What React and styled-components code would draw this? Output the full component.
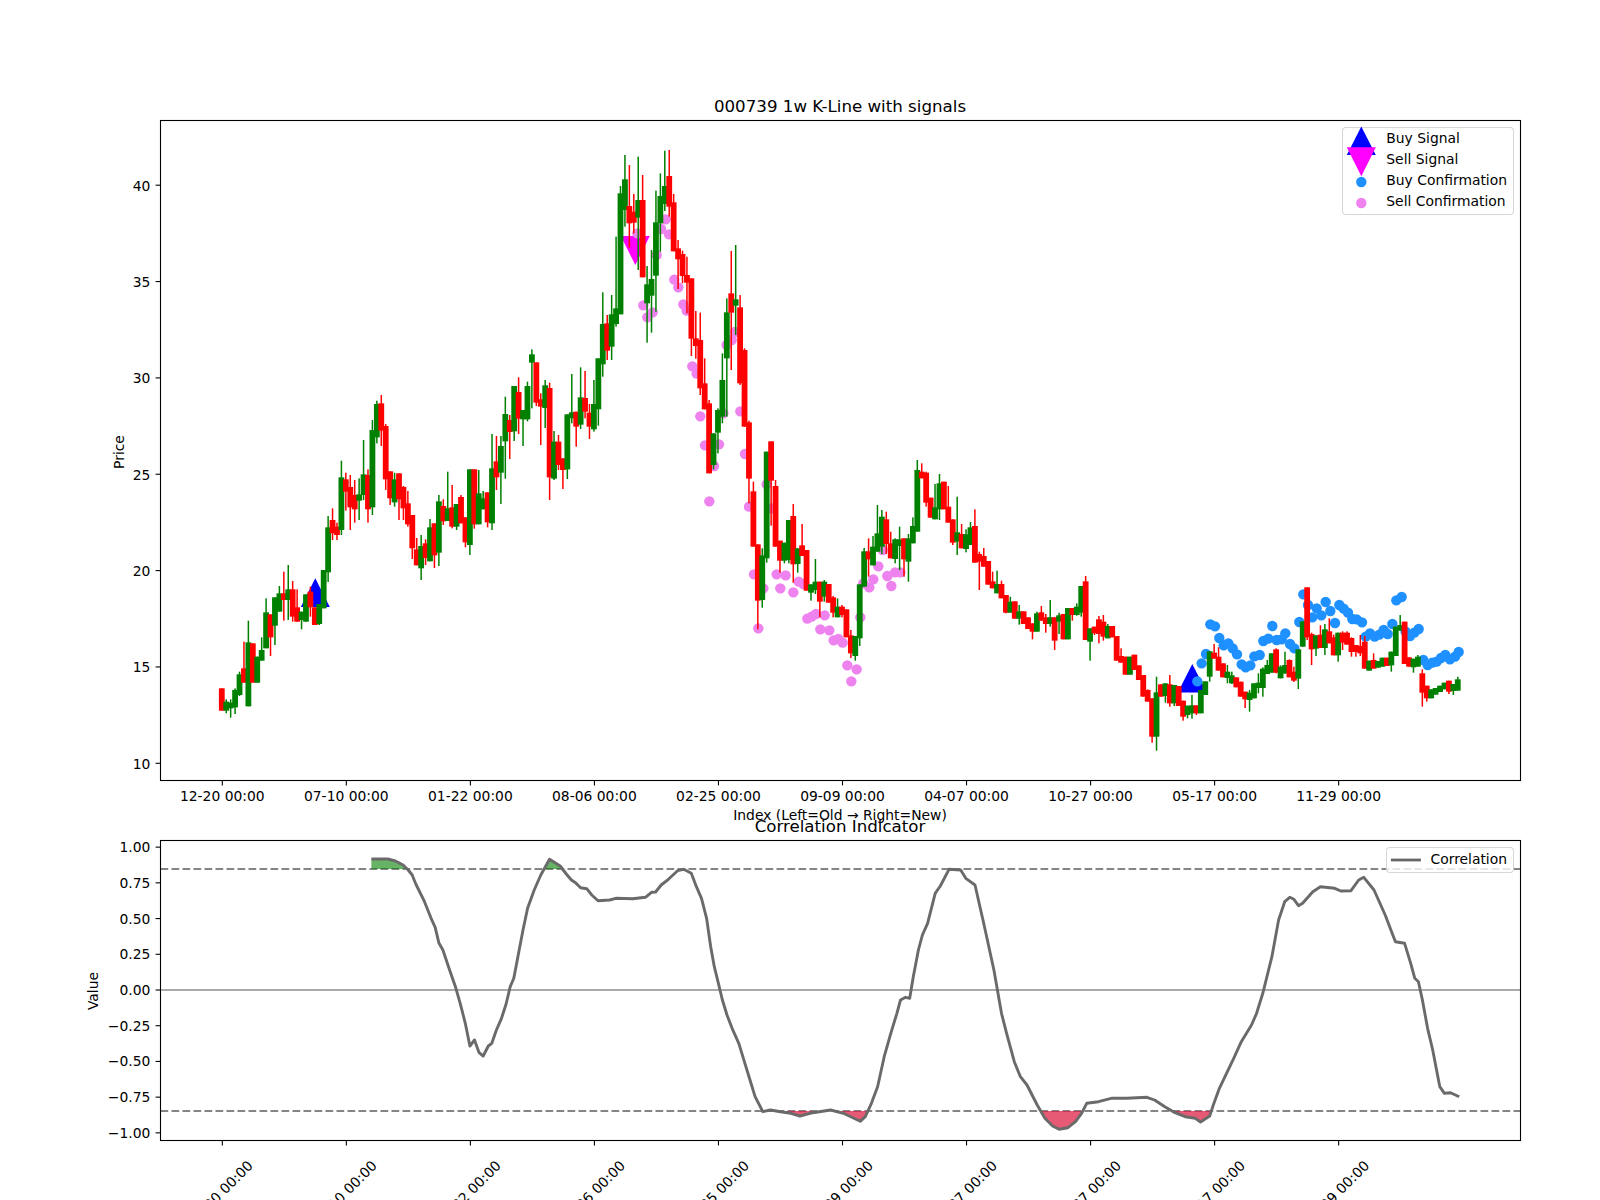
import styled, { createGlobalStyle } from 'styled-components';

const GlobalStyle = createGlobalStyle`
  html, body {
    margin: 0;
    padding: 0;
    background: #fff;
  }
`;

const Figure = styled.div`
  position: relative;
  display: flex;
  flex-direction: column;
  width: 1600px;
  height: 1200px;
  overflow: hidden;
  background: #fff;
  font-family: 'DejaVu Sans', sans-serif;
  color: #000;
`;

const Panel = styled.div`
  position: relative;
  width: 1600px;
  height: ${({ $height }) => $height}px;
`;

const ChartSvg = styled.svg`
  display: block;
  width: 1600px;
  height: ${({ $height }) => $height}px;
  overflow: visible;
`;

const AxisText = styled.text`
  font-family: 'DejaVu Sans', sans-serif;
  font-size: 13.89px;
  fill: #000;
`;

const TitleText = styled.text`
  font-family: 'DejaVu Sans', sans-serif;
  font-size: 16.67px;
  fill: #000;
`;

const Legend = styled.div`
  position: absolute;
  left: ${({ $left }) => $left}px;
  top: ${({ $top }) => $top}px;
  width: ${({ $width }) => $width}px;
  box-sizing: border-box;
  display: flex;
  flex-direction: column;
  padding: ${({ $pad }) => $pad}px 0;
  background: rgba(255, 255, 255, 0.8);
  border: 1.1px solid rgba(204, 204, 204, 0.8);
  border-radius: 4px;
`;

const LegendRow = styled.div`
  display: flex;
  align-items: center;
  box-sizing: border-box;
  height: 21px;
  padding-bottom: 2px;
  font-size: 13.89px;
  line-height: 19px;
  white-space: nowrap;
`;

const LegendKey = styled.svg`
  flex: none;
  width: ${({ $width }) => $width}px;
  height: 21px;
  margin-right: ${({ $gap }) => $gap}px;
  overflow: visible;
`;

const COLORS = { r: '#ff0000', g: '#008000' };
const BLUE = '#1e90ff';
const VIOLET = '#ee82ee';

// axes boxes, figure pixels of a 16x12in matplotlib figure at 100 dpi
const PRICE = { x: 160.5, y: 120.5, w: 1360, h: 660 };
const CORR = { x: 160.5, y: 840.5, w: 1360, h: 300 };
const CORR_TOP = 800;

const candleX = (i) => 221.8 + 4.43 * i;
const tickX = (i) => candleX(i * 28) + 0.5;
const priceY = (v) => 763.3 - (v - 10) * 19.27;
const corrY = (v) => 990 - v * 142.86;

const DATES = ['12-20', '07-10', '01-22', '08-06', '02-25', '09-09', '04-07', '10-27', '05-17', '11-29'];

// candle rows read off the chart: colour, body top, body bottom, high, low.
// each block has its own vertical offset, values are at 3x
const block = (off, text) =>
  text
    .trim()
    .split(/\s*\n\s*/)
    .map((row) => {
      const [c, t, b, h, l] = row.split(' ');
      return { c, t: off + t / 3, b: off + b / 3, h: off + h / 3, l: off + l / 3 };
    });

const CANDLES = [
  ...block(400, `r 865 932 865 932
    g 905 932 898 940
    g 908 925 898 953
    g 870 922 865 942
    g 823 885 815 888
    r 805 848 725 848
    g 727 919 662 919
    r 730 848 730 848
    g 770 848 770 848
    g 750 782 712 782
    g 637 745 595 745
    r 643 712 643 768
    g 592 677 592 735
    g 580 635 558 635
    r 580 600 515 662
    g 568 600 495 660
    r 568 650 543 665
    r 622 665 568 665
    g 635 660 635 688
    g 583 665 583 665
    r 575 622 560 650
    r 622 675 622 675
    g 612 672 612 675
    g 510 625 510 625
    g 382 517 348 546
    r 360 400 325 420
    r 380 405 368 420`),
  ...block(340, `g 412 570 362 585
    r 418 455 398 512
    r 441 502 405 570
    r 465 508 420 548
    g 463 482 415 540
    g 403 465 300 480
    r 405 508 388 548
    g 270 502 240 525
    g 192 292 182 310
    r 190 272 165 318
    r 258 418 252 450
    r 394 475 394 495
    g 418 487 398 500
    r 400 478 400 540
    r 441 505 438 540
    r 490 553 453 560
    r 525 625 525 657
    r 628 676 594 676
    g 618 685 585 720
    r 610 654 598 675
    g 562 664 537 664
    r 550 646 550 684
    g 484 638 465 678
    r 498 544 478 555
    g 505 543 395 543
    r 502 560 435 565
    g 492 560 492 570
    r 471 550 465 550
    r 532 607 532 622
    g 388 615 388 645
    r 388 553 388 566
    g 460 553 390 553
    g 475 508 453 508
    r 457 547 457 562
    g 385 550 282 570
    r 364 412 288 450
    g 318 398 288 492
    g 222 304 170 416
    r 240 276 225 357
    g 138 274 138 303
    r 156 236 112 282
    g 210 238 210 318
    g 138 238 125 244
    g 43 68 28 205
    r 67 188 67 198
    r 178 200 160 315
    g 136 204 120 264
    r 144 412 128 480`),
  ...block(130, `g 935 1046 903 1050
    r 935 1005 915 1020
    r 985 1020 985 1077
    g 853 1018 853 1047
    g 847 865 732 880
    r 845 890 845 950
    g 802 884 712 897
    r 804 845 723 865
    r 848 890 822 927
    g 822 898 750 905
    g 685 838 685 887
    g 582 703 487 740
    r 580 662 555 690
    g 553 650 495 690
    g 535 582 320 590
    g 190 553 168 553
    g 148 240 75 290
    r 228 280 105 353
    r 245 278 192 310
    g 210 263 80 420
    r 210 442 135 442
    g 463 520 408 638
    g 447 497 360 608
    g 277 437 182 545
    g 198 280 130 365
    g 168 222 62 243
    r 138 230 60 260
    r 217 364 192 364
    r 355 388 330 477
    r 372 438 362 460
    r 435 458 380 550
    r 445 626 445 678
    r 625 648 543 686
    r 630 775 548 795
    r 760 838 685 838
    r 820 1030 810 1030
    g 910 1005 910 1018
    g 840 908 835 970
    g 750 860 670 880
    g 547 685 505 860
    r 490 548 363 720
    g 508 527 345 615
    r 532 760 495 765
    r 660 890 655 890
    r 877 1046 872 1120`),
  ...block(430, `r 184 350 155 350
    r 343 512 343 598
    g 376 510 355 533
    g 65 385 65 398
    r 34 152 34 287
    r 168 350 150 350
    r 332 392 332 428
    g 338 392 338 400
    g 270 390 270 400
    r 258 403 222 458
    g 355 402 355 428
    r 346 378 282 378
    r 360 482 360 482
    g 463 488 463 512
    g 455 480 387 492
    r 455 515 455 562
    g 455 500 450 515
    r 462 518 462 518
    r 502 548 498 562
    g 530 562 505 562
    r 530 555 525 562
    r 538 622 538 622
    r 616 670 600 684
    g 618 678 618 692
    g 463 625 463 648
    g 364 470 354 470
    r 364 388 325 440
    g 350 406 318 406
    g 310 365 225 365
    g 260 350 240 372
    r 268 342 245 372
    r 340 385 305 385
    g 328 387 325 400
    g 328 348 290 420
    r 325 388 325 440
    g 325 395 312 455
    g 288 340 262 340
    g 120 305 90 305
    r 125 145 100 145
    r 128 218 125 230
    r 203 263 203 263
    g 232 268 162 268
    g 160 238 132 270
    r 155 238 155 238
    r 230 278 168 278
    r 268 338 268 345
    g 307 335 200 375
    r 312 355 282 355
    g 313 357 298 367
    g 292 345 276 345
    r 288 398 238 398
    r 372 395 365 480
    r 378 410 354 410
    r 393 464 393 464
    r 454 475 425 475
    g 462 490 422 490
    r 462 505 452 505
    r 495 548 495 550
    g 515 548 500 548
    r 514 566 514 566
    g 544 566 525 584
    r 544 582 544 582
    r 562 597 562 597
    r 580 605 580 628
    g 550 605 545 605
    r 547 572 528 572
    r 562 582 552 608
    g 562 582 510 590
    r 562 632 562 660
    g 556 575 548 612
    r 552 628 552 628
    g 534 628 534 628
    r 534 555 534 572
    g 530 555 520 557
    g 468 548 468 560
    r 454 630 438 630
    g 595 635 595 692
    r 590 610 590 615
    r 568 612 558 640`),
  ...block(560, `r 185 230 165 242
    g 198 235 192 235
    r 198 232 198 232
    r 228 302 228 302
    r 288 308 265 308
    r 290 344 290 344
    g 290 344 290 344
    r 284 330 284 330
    r 316 360 316 360
    r 345 410 345 410
    r 390 425 388 425
    r 415 530 415 548
    g 397 530 350 572
    r 373 410 373 410
    g 370 408 370 428
    r 373 430 345 440
    g 375 430 375 438
    r 378 438 378 438
    r 422 470 422 482
    g 437 465 437 475
    g 436 460 405 476
    r 436 460 436 465
    g 390 460 390 460
    g 364 405 364 405
    g 274 350 274 365
    r 278 296 252 296
    r 290 332 262 332
    r 310 352 310 352
    g 335 354 315 370
    g 346 370 335 372
    r 352 382 352 382
    r 365 410 365 410
    r 395 418 395 444
    g 398 420 390 455
    g 370 415 370 415
    g 368 384 340 400
    g 326 384 322 410
    g 315 342 300 342
    g 280 338 280 338
    r 268 338 265 340
    g 320 355 316 355
    g 315 340 275 342
    r 300 352 298 352
    r 335 362 320 366
    g 268 356 268 387
    g 184 260 184 260
    r 82 232 82 240
    r 222 268 218 315
    g 226 266 226 288
    r 224 264 196 264
    g 208 264 192 285
    r 214 250 175 250
    r 232 286 224 286
    g 218 286 218 305
    r 218 248 214 270
    r 218 254 214 254
    r 234 276 232 290
    r 255 276 255 290
    r 258 280 225 288
    r 245 326 228 326
    g 302 332 302 332
    r 300 326 280 326
    g 303 323 303 323
    g 293 320 293 320
    r 293 318 293 318
    g 275 316 275 335
    g 200 288 200 288
    g 195 212 165 212
    r 185 312 185 312
    r 292 320 292 320
    g 296 322 296 338
    g 290 320 285 320
    r 340 398 328 440
    r 377 415 377 425
    g 388 415 388 415
    g 384 404 384 404
    g 377 396 377 396
    g 368 388 368 388
    r 362 395 362 402
    g 372 393 372 405
    g 358 392 350 392`),
];

const dots = (x0, y0, list) => list.map(([x, y]) => [x0 + x / 3, y0 + y / 3]);

const BUY_DOTS = dots(1100, 560, [
  [292, 364], [305, 310], [318, 282], [331, 193], [345, 199], [358, 234], [371, 256], [385, 250], [398, 265],
  [411, 283], [425, 313], [437, 322], [451, 316], [463, 289], [479, 285], [490, 243], [505, 236], [517, 198],
  [530, 240], [545, 238], [556, 220], [570, 252], [583, 265], [598, 186], [610, 103], [624, 135], [637, 172],
  [650, 145], [664, 166], [677, 126], [691, 153], [705, 189], [718, 135], [731, 146], [744, 158], [757, 177],
  [770, 178], [786, 187], [797, 230], [810, 220], [824, 230], [838, 224], [851, 210], [863, 222], [877, 192],
  [889, 121], [905, 111], [917, 215], [930, 228], [943, 218], [956, 207], [970, 300], [983, 315], [997, 308],
  [1010, 305], [1023, 294], [1036, 285], [1050, 298], [1065, 290], [1076, 276],
]);

const SELL_DOTS = [
  ...dots(550, 130, [
    [262, 310], [347, 268], [333, 297], [357, 313], [320, 375], [373, 449], [385, 472], [400, 523], [410, 542],
    [280, 526], [308, 547], [292, 562], [427, 709], [440, 731], [451, 859], [530, 645], [545, 630], [555, 606],
    [520, 850], [571, 844],
  ]),
  ...dots(700, 430, [
    [15, 46], [57, 43], [42, 108], [28, 214], [135, 72], [147, 230], [200, 163], [215, 235], [162, 433], [190, 475],
    [175, 595], [230, 433], [257, 436], [241, 475], [280, 487], [296, 455], [310, 462], [322, 566], [335, 560],
    [348, 552], [374, 556], [361, 598], [388, 601], [401, 631], [415, 627], [428, 638], [442, 706], [470, 718],
    [454, 754], [481, 562], [490, 460], [508, 472], [520, 448], [535, 409], [548, 360], [562, 438], [574, 468],
    [585, 427], [601, 427],
  ]),
];

const curve = (x0, list) => list.map(([x, y]) => [x0 + x / 1.96, 780 + y / 3]);

const CORR_LINE = [
  ...curve(0, [
    [728, 237], [760, 237], [775, 243], [790, 255], [800, 270], [808, 285], [815, 312], [832, 365], [845, 415],
    [853, 442], [860, 488], [868, 510], [880, 565], [893, 622], [902, 670], [912, 730], [921, 798], [930, 780],
    [939, 818], [947, 828], [957, 798], [964, 790], [973, 750], [983, 715], [992, 672], [1000, 620], [1007, 595],
    [1015, 530], [1025, 450], [1034, 385], [1047, 330], [1060, 285], [1077, 238], [1098, 258], [1110, 282],
    [1120, 300], [1128, 308], [1138, 323], [1150, 326], [1160, 345], [1172, 362], [1195, 360], [1207, 355],
    [1240, 356], [1265, 352], [1277, 337], [1285, 336], [1296, 315], [1310, 298], [1328, 272], [1340, 268],
    [1355, 280], [1365, 320], [1375, 355], [1385, 415], [1393, 500], [1400, 560], [1408, 610], [1416, 660],
    [1425, 705], [1435, 745], [1448, 790], [1460, 850], [1470, 900], [1480, 950], [1495, 995], [1510, 990],
    [1530, 995], [1550, 1000],
  ]),
  ...curve(800, [
    [0, 1008], [25, 998], [60, 990], [85, 1000], [118, 1024], [128, 1010], [140, 970], [152, 920], [165, 830],
    [178, 760], [190, 700], [197, 660], [207, 652], [215, 655], [222, 590], [232, 510], [240, 465], [250, 430],
    [265, 340], [275, 318], [292, 268], [315, 270], [325, 295], [343, 315], [360, 430], [380, 570], [395, 700],
    [405, 760], [420, 845], [432, 890], [445, 915], [465, 975], [480, 1015], [495, 1038], [508, 1048], [525, 1043],
    [540, 1025], [552, 1000], [562, 970], [585, 965], [610, 955], [640, 955], [680, 952], [695, 960], [715, 980],
    [735, 998], [755, 1010], [775, 1015], [785, 1026], [803, 1008], [810, 975], [822, 925], [850, 835], [865, 785],
    [885, 735], [895, 700], [907, 640], [925, 530], [938, 420], [950, 365], [960, 352], [968, 358], [977, 377],
    [985, 370], [1005, 335], [1020, 320], [1048, 325], [1060, 333], [1080, 332], [1095, 300], [1105, 292],
    [1125, 330], [1147, 405], [1167, 485], [1185, 490], [1197, 550], [1205, 595], [1212, 605], [1220, 660],
    [1230, 745], [1240, 810], [1254, 920], [1263, 940], [1275, 938], [1292, 950],
  ]),
].map(([x, y]) => [x, y - CORR_TOP]);

const pathOf = (pts) => pts.map(([x, y], i) => `${i ? 'L' : 'M'}${x.toFixed(1)} ${y.toFixed(1)}`).join(' ');

const areaTo = (base) => {
  const first = CORR_LINE[0];
  const last = CORR_LINE[CORR_LINE.length - 1];
  return `${pathOf(CORR_LINE)} L${last[0].toFixed(1)} ${base} L${first[0].toFixed(1)} ${base} Z`;
};

const upTriangle = (cx, top) => `${cx},${top} ${cx - 14.5},${top + 28.6} ${cx + 14.5},${top + 28.6}`;
const downTriangle = (cx, top) => `${cx - 14.5},${top} ${cx + 14.5},${top} ${cx},${top + 29}`;

const Frame = ({ box, top = 0 }) => (
  <rect x={box.x} y={box.y - top} width={box.w} height={box.h} fill="none" stroke="#000" strokeWidth="1.1" />
);

const PriceChart = () => {
  const bottom = PRICE.y + PRICE.h;
  return (
    <ChartSvg $height={800} viewBox="0 0 1600 800">
      <polygon points={upTriangle(315.3, 578.3)} fill="#0000ff" />
      <polygon points={upTriangle(1192.3, 664)} fill="#0000ff" />
      <polygon points={downTriangle(635.3, 236)} fill="#ff00ff" />
      {SELL_DOTS.map(([x, y], i) => (
        <circle key={i} cx={x} cy={y} r="5.2" fill={VIOLET} />
      ))}
      {BUY_DOTS.map(([x, y], i) => (
        <circle key={i} cx={x} cy={y} r="5.2" fill={BLUE} />
      ))}
      {CANDLES.map((k, i) => (
        <g key={i} fill={COLORS[k.c]} stroke="none">
          <rect x={candleX(i) - 0.75} y={k.h} width="1.5" height={k.l - k.h} />
          <rect x={candleX(i) - 2.9} y={k.t} width="5.8" height={k.b - k.t} />
        </g>
      ))}
      <Frame box={PRICE} />
      {DATES.map((d, i) => (
        <g key={d}>
          <line x1={tickX(i)} x2={tickX(i)} y1={bottom} y2={bottom + 4.9} stroke="#000" strokeWidth="1.1" />
          <AxisText x={tickX(i)} y={801} textAnchor="middle">{`${d} 00:00`}</AxisText>
        </g>
      ))}
      {[10, 15, 20, 25, 30, 35, 40].map((v) => (
        <g key={v}>
          <line x1={PRICE.x - 4.9} x2={PRICE.x} y1={priceY(v)} y2={priceY(v)} stroke="#000" strokeWidth="1.1" />
          <AxisText x={150.3} y={priceY(v) + 5.5} textAnchor="end">{v}</AxisText>
        </g>
      ))}
      <TitleText x={840} y={111.7} textAnchor="middle">000739 1w K-Line with signals</TitleText>
      <AxisText x={840} y={820} textAnchor="middle">Index (Left=Old → Right=New)</AxisText>
      <AxisText x={124} y={452} textAnchor="middle" transform="rotate(-90 124 452)">Price</AxisText>
    </ChartSvg>
  );
};

const CorrChart = () => {
  const t = CORR.y - CORR_TOP;
  const bottom = t + CORR.h;
  const hi = 69;
  const lo = 311;
  const zero = corrY(0) - CORR_TOP;
  return (
    <ChartSvg $height={400} viewBox="0 0 1600 400">
      <defs>
        <clipPath id="above">
          <rect x={CORR.x} y={t} width={CORR.w} height={hi - t} />
        </clipPath>
        <clipPath id="below">
          <rect x={CORR.x} y={lo} width={CORR.w} height={bottom - lo} />
        </clipPath>
      </defs>
      <line x1={CORR.x} x2={CORR.x + CORR.w} y1={hi} y2={hi} stroke="#858585" strokeWidth="2.08" strokeDasharray="7.7 3.3" />
      <line x1={CORR.x} x2={CORR.x + CORR.w} y1={lo} y2={lo} stroke="#858585" strokeWidth="2.08" strokeDasharray="7.7 3.3" />
      <line x1={CORR.x} x2={CORR.x + CORR.w} y1={zero} y2={zero} stroke="#aaa" strokeWidth="2.08" />
      <path d={areaTo(hi + 1)} fill="#008000" fillOpacity="0.6" clipPath="url(#above)" />
      <path d={areaTo(lo - 1)} fill="#dc143c" fillOpacity="0.7" clipPath="url(#below)" />
      <path d={pathOf(CORR_LINE)} fill="none" stroke="#6a6a6a" strokeWidth="2.9" strokeLinejoin="round" />
      <Frame box={CORR} top={CORR_TOP} />
      {DATES.map((d, i) => (
        <g key={d}>
          <line x1={tickX(i)} x2={tickX(i)} y1={bottom} y2={bottom + 4.9} stroke="#000" strokeWidth="1.1" />
          <AxisText
            x={tickX(i) - 2}
            y={393}
            textAnchor="middle"
            dominantBaseline="central"
            transform={`rotate(-45 ${tickX(i) - 2} 393)`}
          >
            {`${d} 00:00`}
          </AxisText>
        </g>
      ))}
      {[1, 0.75, 0.5, 0.25, 0, -0.25, -0.5, -0.75, -1].map((v) => {
        const y = corrY(v) - CORR_TOP;
        return (
          <g key={v}>
            <line x1={CORR.x - 4.9} x2={CORR.x} y1={y} y2={y} stroke="#000" strokeWidth="1.1" />
            <AxisText x={150.3} y={y + 5} textAnchor="end">
              {`${v < 0 ? '−' : ''}${Math.abs(v).toFixed(2)}`}
            </AxisText>
          </g>
        );
      })}
      <TitleText x={840} y={31.7} textAnchor="middle">Correlation Indicator</TitleText>
      <AxisText x={98} y={191} textAnchor="middle" transform="rotate(-90 98 191)">Value</AxisText>
    </ChartSvg>
  );
};

const App = () => (
  <>
    <GlobalStyle />
    <Figure>
      <Panel $height={800}>
        <PriceChart />
        <Legend $left={1342.3} $top={126.8} $width={172} $pad={1}>
          <LegendRow>
            <LegendKey $width={37} $gap={6} viewBox="0 0 37 21">
              <polygon points={upTriangle(18.3, -1.5)} fill="#0000ff" />
            </LegendKey>
            Buy Signal
          </LegendRow>
          <LegendRow>
            <LegendKey $width={37} $gap={6} viewBox="0 0 37 21">
              <polygon points={downTriangle(18.3, -1.8)} fill="#ff00ff" />
            </LegendKey>
            Sell Signal
          </LegendRow>
          <LegendRow>
            <LegendKey $width={37} $gap={6} viewBox="0 0 37 21">
              <circle cx="18.3" cy="12" r="5.2" fill={BLUE} />
            </LegendKey>
            Buy Confirmation
          </LegendRow>
          <LegendRow>
            <LegendKey $width={37} $gap={6} viewBox="0 0 37 21">
              <circle cx="18.3" cy="12" r="5.2" fill={VIOLET} />
            </LegendKey>
            Sell Confirmation
          </LegendRow>
        </Legend>
      </Panel>
      <Panel $height={400}>
        <CorrChart />
        <Legend $left={1386} $top={47} $width={127.5} $pad={1.5}>
          <LegendRow>
            <LegendKey $width={34.5} $gap={9} viewBox="0 0 34.5 21">
              <line x1="3.9" x2="33.9" y1="11" y2="11" stroke="#666" strokeWidth="2.78" />
            </LegendKey>
            Correlation
          </LegendRow>
        </Legend>
      </Panel>
    </Figure>
  </>
);

export default App;
